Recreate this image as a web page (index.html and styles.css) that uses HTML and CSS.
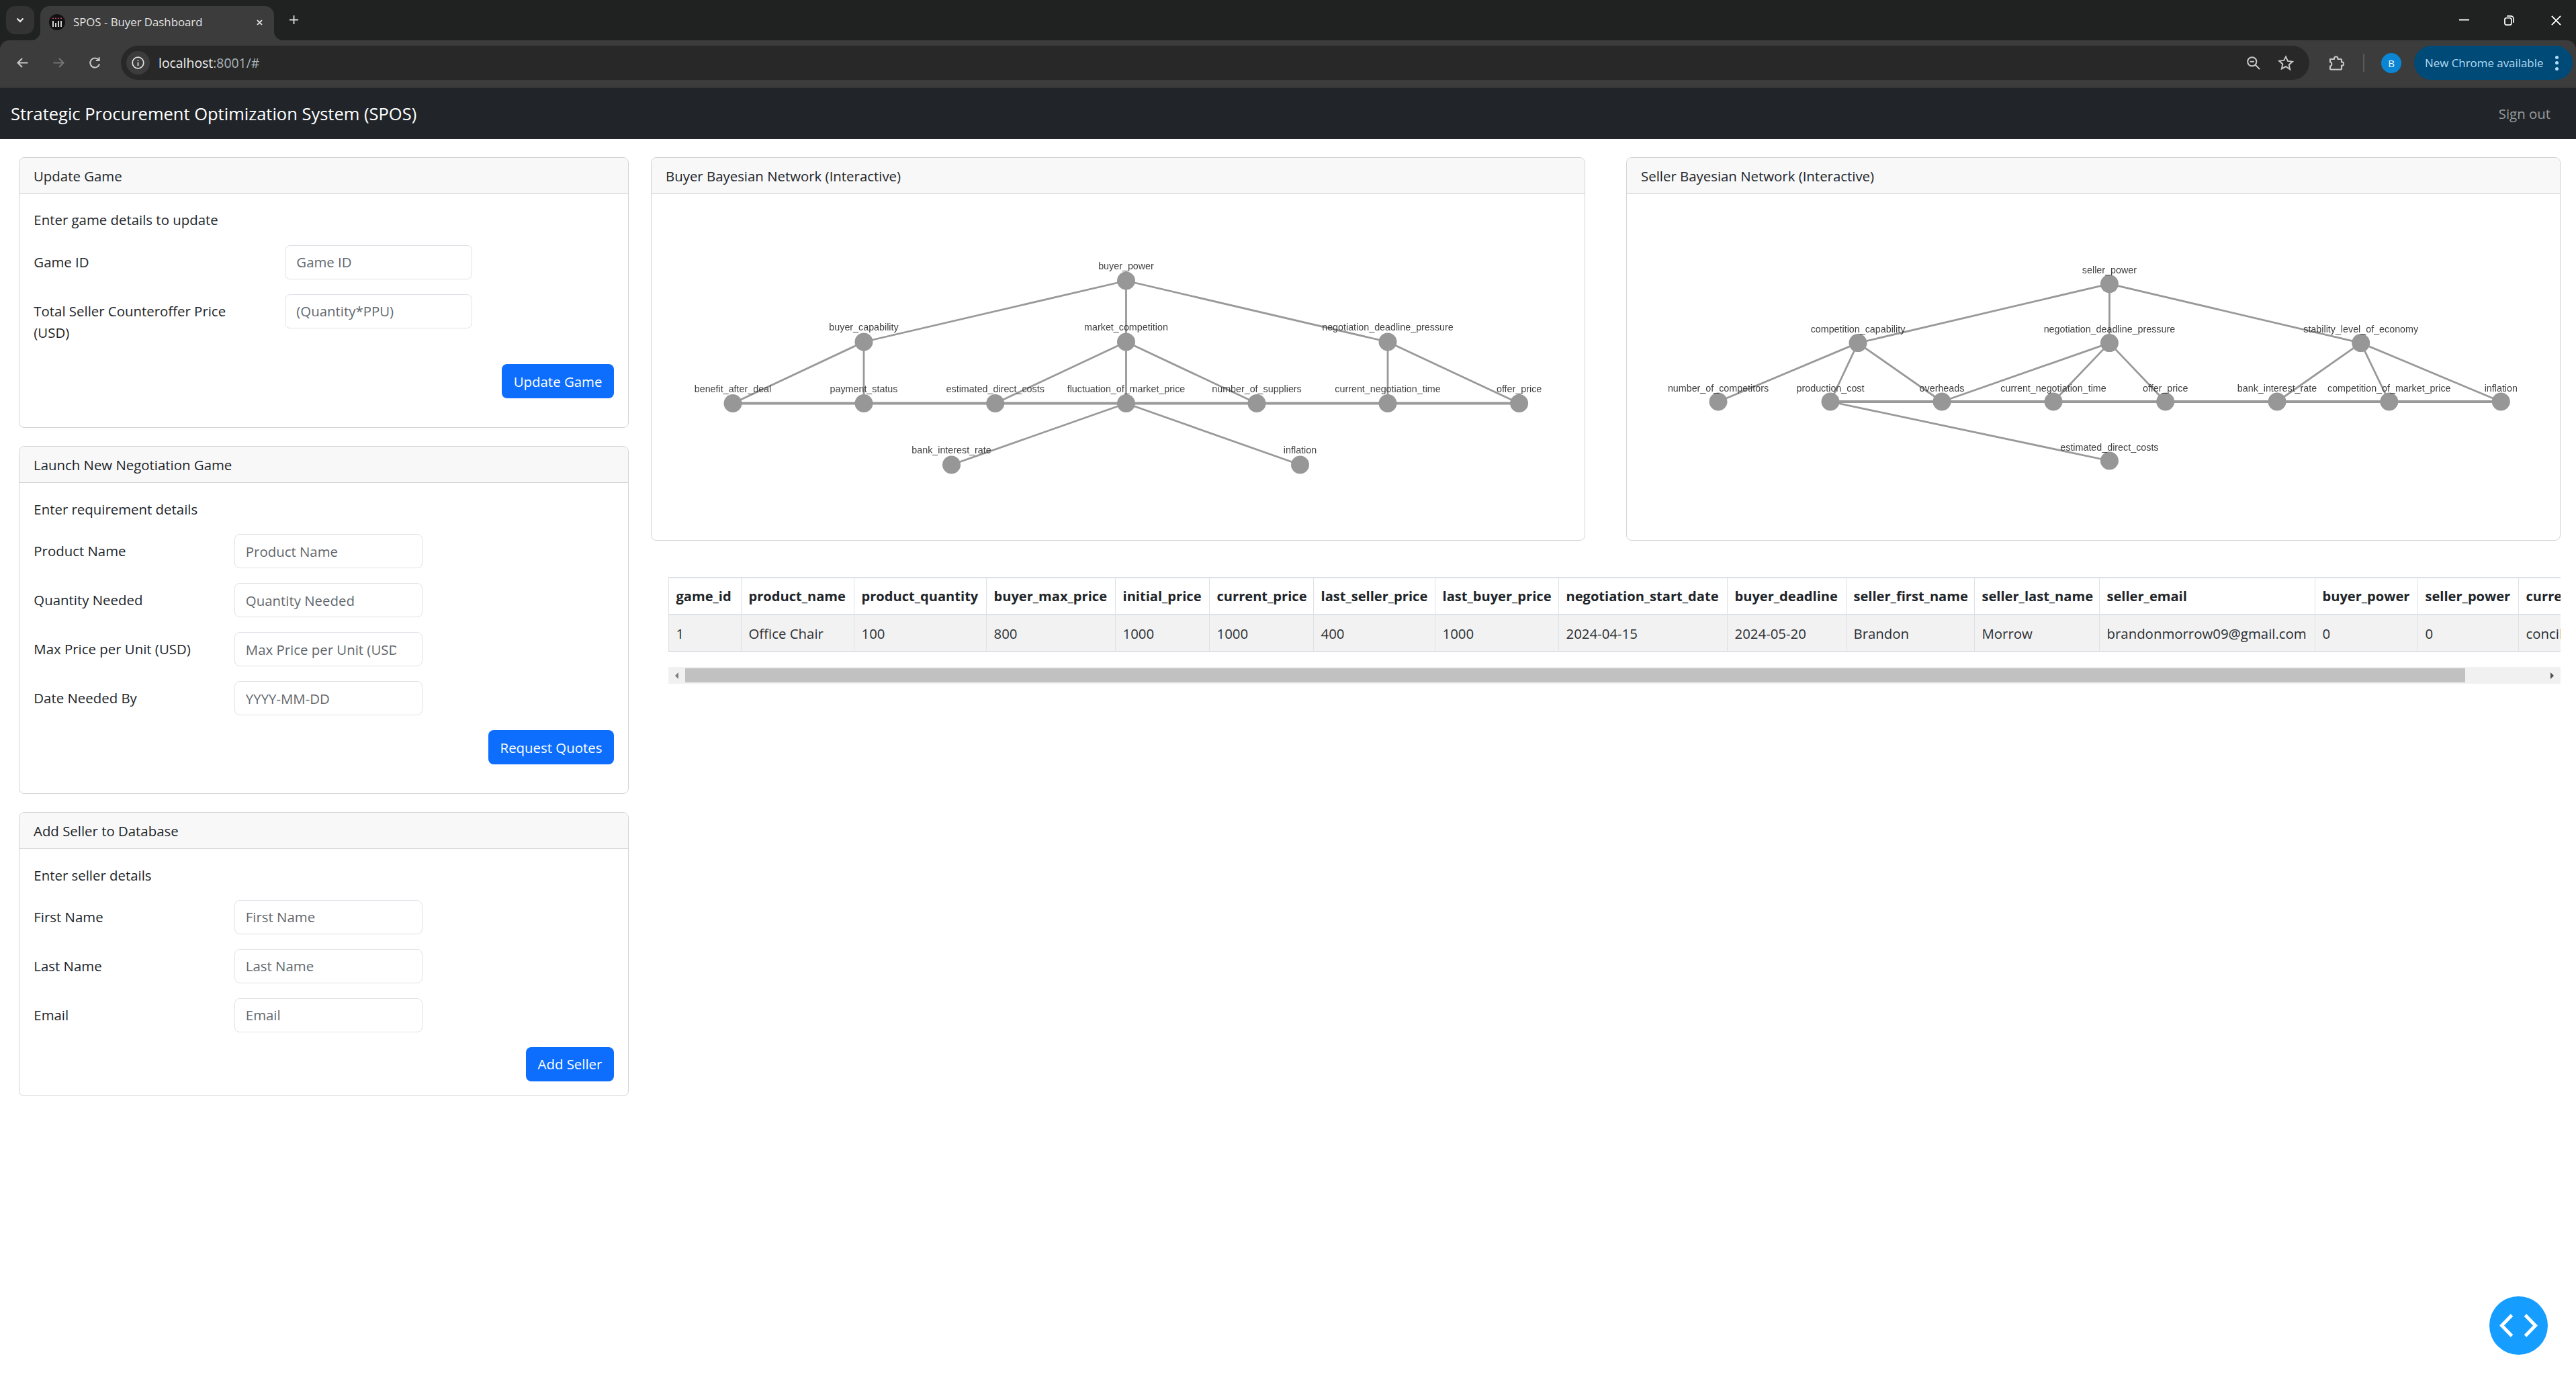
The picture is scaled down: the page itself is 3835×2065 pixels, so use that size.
FILE: index.html
```html
<!DOCTYPE html>
<html lang="en">
<head>
<meta charset="utf-8">
<title>SPOS - Buyer Dashboard</title>
<link rel="stylesheet" href="styles.css">
</head>
<body>
<header class="chrome">
  <div class="tabstrip">
    <div class="tab-search"><svg class="ico" viewBox="0 0 16 16"><path d="M3.5 5.5 8 10l4.5-4.5"/></svg></div>
    <div class="tab">
      <span class="favicon"><svg viewBox="0 0 24 24"><path class="fav-a" d="M6 5.5v1.6M10 5.5v1.6M14 5.5v1.6M18 5.5v1.6"/><path class="fav-b" d="M6 10v9M10 13v6M14 10v9M18 10v9"/></svg></span>
      <span class="tab-title">SPOS - Buyer Dashboard</span>
      <svg class="tab-close" viewBox="0 0 16 16"><path d="M3 3l10 10M13 3 3 13"/></svg>
    </div>
    <svg class="new-tab" viewBox="0 0 16 16"><path d="M8 1v14M1 8h14"/></svg>
    <div class="win-controls">
      <svg class="win-min" viewBox="0 0 16 16"><path d="M0 7h16"/></svg>
      <svg class="win-max" viewBox="0 0 16 16"><rect x="1" y="4" width="10.5" height="11" rx="2.5"/><path d="M4.5 1h6A4.5 4.5 0 0 1 15 5.500v6"/></svg>
      <svg class="win-close" viewBox="0 0 16 16"><path d="M1 1l14 14M15 1 1 15"/></svg>
    </div>
  </div>
  <div class="toolbar">
    <svg class="nav-ico" viewBox="0 0 24 24"><path d="M21 12H4M11.500 4.500 4 12l7.500 7.500"/></svg>
    <svg class="nav-ico dim" viewBox="0 0 24 24"><path d="M3 12h17M12.500 4.500 20 12l-7.500 7.500"/></svg>
    <svg class="nav-ico" viewBox="0 0 24 24"><path d="M19.500 14a8 8 0 1 1-1.500-7M19 2.500V8h-5.500"/></svg>
    <div class="omnibox">
      <span class="site-info"><svg viewBox="0 0 24 24"><circle cx="12" cy="12" r="9.500"/><path d="M12 11v6M12 7v1.800"/></svg></span>
      <span class="url"><span class="url-host">localhost</span>:8001/#</span>
      <svg class="omni-zoom" viewBox="0 0 24 24"><circle cx="10" cy="10" r="7.500"/><path d="M15.500 15.500 23 23M6.500 10h7"/></svg>
      <svg class="omni-star" viewBox="0 0 24 24"><path d="M12 2.500l2.900 6.400 7 .8-5.200 4.700 1.400 6.900L12 17l-6.100 3.300 1.400-6.900-5.200-4.700 7-.8z"/></svg>
    </div>
    <svg class="ext-ico" viewBox="0 0 24 24"><path d="M3 6.500h6c-.5-5 6-5 5.500 0h4.500a1 1 0 0 1 1 1V11c4.500-.5 4.500 5.500 0 5v5a1 1 0 0 1-1 1H4a1 1 0 0 1-1-1v-4c3 0 3-6 0-6z"/></svg>
    <span class="tool-sep"></span>
    <span class="avatar">B</span>
    <div class="update-pill"><span>New Chrome available</span><span class="dots"><i></i><i></i><i></i></span></div>
  </div>
</header>

<nav class="navbar">
  <span class="brand">Strategic Procurement Optimization System (SPOS)</span>
  <a class="signout">Sign out</a>
</nav>

<main class="main">
  <section class="left-col">
    <div class="card">
      <div class="card-header">Update Game</div>
      <div class="card-body">
        <p class="lead-text">Enter game details to update</p>
        <div class="form-row wide"><label>Game ID</label><input placeholder="Game ID"></div>
        <div class="form-row wide"><label>Total Seller Counteroffer Price (USD)</label><input placeholder="(Quantity*PPU)"></div>
        <div class="actions gap"><button class="btn">Update Game</button></div>
      </div>
    </div>
    <div class="card">
      <div class="card-header">Launch New Negotiation Game</div>
      <div class="card-body">
        <p class="lead-text">Enter requirement details</p>
        <div class="form-row"><label>Product Name</label><input placeholder="Product Name"></div>
        <div class="form-row"><label>Quantity Needed</label><input placeholder="Quantity Needed"></div>
        <div class="form-row"><label>Max Price per Unit (USD)</label><input placeholder="Max Price per Unit (USD)"></div>
        <div class="form-row"><label>Date Needed By</label><input placeholder="YYYY-MM-DD"></div>
        <div class="actions gap"><button class="btn">Request Quotes</button></div>
      </div>
    </div>
    <div class="card">
      <div class="card-header">Add Seller to Database</div>
      <div class="card-body">
        <p class="lead-text">Enter seller details</p>
        <div class="form-row"><label>First Name</label><input placeholder="First Name"></div>
        <div class="form-row"><label>Last Name</label><input placeholder="Last Name"></div>
        <div class="form-row"><label>Email</label><input placeholder="Email"></div>
        <div class="actions"><button class="btn">Add Seller</button></div>
      </div>
    </div>
  </section>

  <section class="right-col">
    <div class="graph-row">
      <div class="card graph-card">
        <div class="card-header">Buyer Bayesian Network (Interactive)</div>
        <svg class="graph" viewBox="970 290 1389 515">
          <path class="edge" d="M1676.500 419 1286 510M1676.500 419V510M1676.500 419 2066 510M1286 510 1091 601.500M1286 510V601.500M1676.500 510 1481.700 601.500M1676.500 510V601.500M1676.500 510 1871 601.500M2066 510V601.500M2066 510 2261.600 601.500M1676.500 601.500 1416.500 693M1676.500 601.500 1935.500 693"/>
          <path class="edge-main" d="M1091 601.500H2261.600"/>
          <g class="nodes">
            <circle cx="1676.500" cy="419" r="13.500"/><circle cx="1286" cy="510" r="13.500"/><circle cx="1676.500" cy="510" r="13.500"/><circle cx="2066" cy="510" r="13.500"/><circle cx="1091" cy="601.500" r="13.500"/><circle cx="1286" cy="601.500" r="13.500"/><circle cx="1481.700" cy="601.500" r="13.500"/><circle cx="1676.500" cy="601.500" r="13.500"/><circle cx="1871" cy="601.500" r="13.500"/><circle cx="2066" cy="601.500" r="13.500"/><circle cx="2261.600" cy="601.500" r="13.500"/><circle cx="1416.500" cy="693" r="13.500"/><circle cx="1935.500" cy="693" r="13.500"/>
          </g>
          <g class="labels">
            <text x="1676.500" y="402">buyer_power</text><text x="1286" y="493">buyer_capability</text><text x="1676.500" y="493">market_competition</text><text x="2066" y="493">negotiation_deadline_pressure</text><text x="1091" y="584.500">benefit_after_deal</text><text x="1286" y="584.500">payment_status</text><text x="1481.700" y="584.500">estimated_direct_costs</text><text x="1676.500" y="584.500">fluctuation_of_market_price</text><text x="1871" y="584.500">number_of_suppliers</text><text x="2066" y="584.500">current_negotiation_time</text><text x="2261.600" y="584.500">offer_price</text><text x="1416.500" y="676">bank_interest_rate</text><text x="1935.500" y="676">inflation</text>
          </g>
        </svg>
      </div>
      <div class="card graph-card">
        <div class="card-header">Seller Bayesian Network (Interactive)</div>
        <svg class="graph" viewBox="2422 290 1389 515">
          <path class="edge" d="M3140.400 423.600 2766 511.600M3140.400 423.600V511.600M3140.400 423.600 3514.700 511.600M2766 511.600 2558 599M2766 511.600 2725 599M2766 511.600 2891 599M3140.400 511.600 2891 599M3140.400 511.600 3057 599M3140.400 511.600 3223.700 599M3514.700 511.600 3390 599M3514.700 511.600 3556.800 599M3514.700 511.600 3723.300 599M2725 599 3140.400 687"/>
          <path class="edge-main" d="M2725 599H3723.300"/>
          <g class="nodes">
            <circle cx="3140.400" cy="423.600" r="13.500"/><circle cx="2766" cy="511.600" r="13.500"/><circle cx="3140.400" cy="511.600" r="13.500"/><circle cx="3514.700" cy="511.600" r="13.500"/><circle cx="2558" cy="599" r="13.500"/><circle cx="2725" cy="599" r="13.500"/><circle cx="2891" cy="599" r="13.500"/><circle cx="3057" cy="599" r="13.500"/><circle cx="3223.700" cy="599" r="13.500"/><circle cx="3390" cy="599" r="13.500"/><circle cx="3556.800" cy="599" r="13.500"/><circle cx="3723.300" cy="599" r="13.500"/><circle cx="3140.400" cy="687" r="13.500"/>
          </g>
          <g class="labels">
            <text x="3140.400" y="408">seller_power</text><text x="2766" y="496">competition_capability</text><text x="3140.400" y="496">negotiation_deadline_pressure</text><text x="3514.700" y="496">stability_level_of_economy</text><text x="2558" y="583.500">number_of_competitors</text><text x="2725" y="583.500">production_cost</text><text x="2891" y="583.500">overheads</text><text x="3057" y="583.500">current_negotiation_time</text><text x="3223.700" y="583.500">offer_price</text><text x="3390" y="583.500">bank_interest_rate</text><text x="3556.800" y="583.500">competition_of_market_price</text><text x="3723.300" y="583.500">inflation</text><text x="3140.400" y="671.500">estimated_direct_costs</text>
          </g>
        </svg>
      </div>
    </div>

    <div class="table-area">
      <div class="table-clip">
        <table class="data-table">
          <thead>
            <tr><th>game_id</th><th>product_name</th><th>product_quantity</th><th>buyer_max_price</th><th>initial_price</th><th>current_price</th><th>last_seller_price</th><th>last_buyer_price</th><th>negotiation_start_date</th><th>buyer_deadline</th><th>seller_first_name</th><th>seller_last_name</th><th>seller_email</th><th>buyer_power</th><th>seller_power</th><th>current_state</th></tr>
          </thead>
          <tbody>
            <tr><td>1</td><td>Office Chair</td><td>100</td><td>800</td><td>1000</td><td>1000</td><td>400</td><td>1000</td><td>2024-04-15</td><td>2024-05-20</td><td>Brandon</td><td>Morrow</td><td>brandonmorrow09@gmail.com</td><td>0</td><td>0</td><td>conciliatory</td></tr>
          </tbody>
        </table>
      </div>
      <div class="scrollbar">
        <span class="sb-arrow"><i class="tri-left"></i></span>
        <span class="sb-thumb"></span>
        <span class="sb-arrow end"><i class="tri-right"></i></span>
      </div>
    </div>
  </section>
</main>

<button class="fab"><svg viewBox="0 0 87 87"><path d="M33.500 28 18.500 43.500 33.500 59M53.500 28 68.500 43.500 53.500 59"/></svg></button>
</body>
</html>
```
FILE: styles.css
```css
* { box-sizing: border-box; }
html, body { margin: 0; height: 100%; }
body {
  height: 2065px;
  overflow: hidden;
  background: #fff;
  color: #212529;
  font-family: "Open Sans", "Noto Sans", sans-serif;
  font-size: 20.4px;
  line-height: 32px;
}

/* Browser chrome */
.chrome { background: #202221; height: 131px; }
.tabstrip { display: flex; height: 60px; }
.tab-search {
  width: 42px; height: 42px; margin: 9px 0 0 9px;
  background: #333; border-radius: 14px;
  display: flex; align-items: center; justify-content: center;
}
.ico { width: 16px; height: 16px; fill: none; stroke: #e3e3e3; stroke-width: 2.4; }
.tab {
  position: relative;
  width: 348px; height: 51px; margin: 9px 0 0 9px;
  background: #3c3c3c; border-radius: 14px 14px 0 0;
  display: flex; align-items: center;
  padding: 0 16px 3px 13px;
}
.tab::before, .tab::after {
  content: ""; position: absolute; bottom: 0; width: 14px; height: 14px;
}
.tab::before { left: -14px; background: radial-gradient(circle at 0 0, transparent 14px, #3c3c3c 14.5px); }
.tab::after { right: -14px; background: radial-gradient(circle at 100% 0, transparent 14px, #3c3c3c 14.5px); }
.favicon { width: 24px; height: 24px; border-radius: 50%; background: #111; display: block; flex: none; }
.favicon svg { display: block; width: 24px; height: 24px; fill: none; stroke-width: 1.7; }
.fav-a { stroke: #e0457b; }
.fav-b { stroke: #f2f2f2; }
.tab-title { margin-left: 12px; font-size: 16.8px; color: #e3e3e3; white-space: nowrap; line-height: 24px; }
.tab-close { width: 11px; height: 11px; margin-left: auto; fill: none; stroke: #e8e8e8; stroke-width: 2.6; }
.new-tab { width: 15px; height: 15px; margin: 22px 0 0 22px; fill: none; stroke: #d8d8d8; stroke-width: 2; }
.win-controls { margin-left: auto; display: flex; align-items: center; height: 60px; padding-right: 22px; }
.win-controls svg { fill: none; stroke: #fff; stroke-width: 2; }
.win-min { width: 15px; height: 15px; }
.win-max { width: 15px; height: 15px; margin-left: 52px; stroke-width: 1.8 !important; }
.win-close { width: 15px; height: 15px; margin-left: 55px; }

.toolbar {
  height: 71px;
  background: #3c3c3c;
  border-bottom: 2px solid #373737;
  border-radius: 14px 14px 0 0;
  display: flex; align-items: center;
  padding: 0 5px 2px 23px;
}
.nav-ico { width: 21px; height: 21px; margin-right: 33px; fill: none; stroke: #c7c7c7; stroke-width: 2.4; flex: none; }
.nav-ico.dim { stroke: #747474; }
.nav-ico:nth-of-type(3) { margin-right: 28px; }
.omnibox {
  width: 1258px; flex: 1 0 auto; height: 51px;
  background: #282828; border-radius: 26px;
  display: flex; align-items: center;
  padding: 0 23px 0 8px;
}
.site-info {
  width: 35px; height: 35px; border-radius: 50%; background: #3c3c3c;
  display: flex; align-items: center; justify-content: center; flex: none;
}
.site-info svg { width: 21px; height: 21px; fill: none; stroke: #e0e0e0; stroke-width: 2; }
.url { margin-left: 13px; font-size: 19.4px; color: #a8b4bb; line-height: 24px; }
.url-host { color: #ececec; }
.omni-zoom { width: 21px; height: 21px; margin-left: auto; fill: none; stroke: #c7c7c7; stroke-width: 2.4; }
.omni-star { width: 24px; height: 24px; margin-left: 26px; fill: none; stroke: #c7c7c7; stroke-width: 2; }
.ext-ico { width: 24px; height: 25px; margin-left: 28px; fill: none; stroke: #c7c7c7; stroke-width: 2.2; stroke-linejoin: round; flex: none; }
.tool-sep { width: 2px; height: 27px; background: #5a5a5a; margin-left: 28px; flex: none; }
.avatar {
  width: 30px; height: 30px; border-radius: 50%; background: #0b86d4; color: #f2f8fc;
  font-size: 15px; line-height: 30px; text-align: center; margin-left: 25px; flex: none;
}
.update-pill {
  width: 236px; height: 51px; margin-left: 19px; flex: none;
  background: #004a77; border-radius: 26px; color: #b4dcf5;
  display: flex; align-items: center; padding-left: 16px;
  font-size: 16.9px; white-space: nowrap; line-height: 24px;
}
.dots { display: flex; flex-direction: column; gap: 3.5px; margin-left: auto; margin-right: 21px; }
.dots i { display: block; width: 5px; height: 5px; border-radius: 50%; background: #b4dcf5; }

/* Navbar */
.navbar {
  height: 76px; background: #212529;
  display: flex; align-items: center; justify-content: space-between;
  padding: 0 38px 2px 16px;
}
.brand { color: #fff; font-size: 25.5px; white-space: nowrap; padding-top: 2px; }
.signout { color: rgba(255,255,255,.55); padding-top: 2px; }

/* Layout */
.main { display: flex; padding: 27px 23px 0 28px; }
.left-col { width: 908px; flex: none; display: flex; flex-direction: column; gap: 27.5px; }
.right-col { flex: 1; min-width: 0; margin-left: 33px; }
.graph-row { display: flex; gap: 61px; }

/* Cards */
.card { border: 1.33px solid #d3d3d4; border-radius: 8px; background: #fff; overflow: hidden; }
.graph-card { flex: 1; min-width: 0; height: 571px; }
.card-header {
  height: 54px; padding: 0 21px; line-height: 54px;
  background: #f8f8f8; border-bottom: 1.33px solid #d3d3d4;
}
.card-body { padding: 22.33px 21.33px 21.33px; }
.lead-text { margin: 0 0 21.33px; }
.form-row { display: flex; align-items: flex-start; margin-bottom: 22px; }
.form-row label { width: 298.500px; flex: none; padding: 9.330px 0; line-height: 32px; }
.form-row.wide label { width: 374px; padding-right: 60px; }
.form-row input {
  width: 280.500px; height: 51px; flex: none;
  padding: 0 38px 0 16px; border: 1.33px solid #dee2e6; border-radius: 8px;
  font: inherit; color: #212529; background: #fff; outline: 0;
}
.form-row.wide input { width: 279px; }
.form-row input::placeholder { color: #62686e; opacity: 1; }
.actions { display: flex; justify-content: flex-end; }
.actions.gap { margin-bottom: 21.33px; }
.btn {
  height: 51px; padding: 0 17.3px; border: 0; border-radius: 8px;
  background: #0d6efd; color: #fff; font: inherit;
}

/* Graphs */
.graph { display: block; width: 1389px; height: 515px; filter: blur(.35px); }
.edge { fill: none; stroke: #999; stroke-width: 2.8; }
.edge-main { fill: none; stroke: #999; stroke-width: 3.8; }
.nodes circle { fill: #979797; }
.labels text {
  font-family: "Liberation Sans", Arial, sans-serif;
  font-size: 14.3px; fill: #404040; text-anchor: middle;
}

/* Table */
.table-area { margin: 54px 0 0 25.5px; }
.table-clip { overflow: hidden; }
.data-table {
  table-layout: fixed; width: 2821px; border-collapse: collapse;
  background: #fff;
}
.data-table th, .data-table td {
  height: 55px; padding: 0 0 0 11px; text-align: left; white-space: nowrap; overflow: hidden;
  border: 1.33px solid #dee2e6;
}
.data-table th { font-size: 20.1px; }
.data-table thead th { border-bottom-width: 2.67px; font-weight: 700; }
.data-table thead tr { border-top: 2px solid #dee2e6; }
.data-table tbody tr { border-bottom: 2px solid #dee2e6; }
.data-table td { background: #f2f2f2; color: #2b2f33; }
.data-table th:nth-child(1) { width: 108px; }
.data-table th:nth-child(2) { width: 168px; }
.data-table th:nth-child(3) { width: 197px; }
.data-table th:nth-child(4) { width: 192px; }
.data-table th:nth-child(5) { width: 140px; }
.data-table th:nth-child(6) { width: 155px; }
.data-table th:nth-child(7) { width: 181px; }
.data-table th:nth-child(8) { width: 184px; }
.data-table th:nth-child(9) { width: 251px; }
.data-table th:nth-child(10) { width: 177px; }
.data-table th:nth-child(11) { width: 191px; }
.data-table th:nth-child(12) { width: 186px; }
.data-table th:nth-child(13) { width: 321px; }
.data-table th:nth-child(14) { width: 153px; }
.data-table th:nth-child(15) { width: 150px; }
.data-table th:nth-child(16) { width: 200px; }

.scrollbar { display: flex; height: 25px; margin-top: 22px; background: #f1f1f1; align-items: center; }
.sb-arrow { width: 25px; height: 25px; flex: none; display: flex; align-items: center; justify-content: center; }
.sb-arrow.end { margin-left: auto; }
.sb-thumb { width: 2650px; height: 21px; background: #c1c1c1; }
.tri-left, .tri-right { width: 0; height: 0; border-top: 5px solid transparent; border-bottom: 5px solid transparent; }
.tri-left { border-right: 5px solid #7c7c7c; }
.tri-right { border-left: 5px solid #505050; }

/* Floating button */
.fab {
  position: fixed; right: 42px; bottom: 48px;
  width: 87px; height: 87px; padding: 0; border: 0; border-radius: 50%;
  background: #159eff;
}
.fab svg { display: block; width: 87px; height: 87px; fill: none; stroke: #fff; stroke-width: 5; }
```
